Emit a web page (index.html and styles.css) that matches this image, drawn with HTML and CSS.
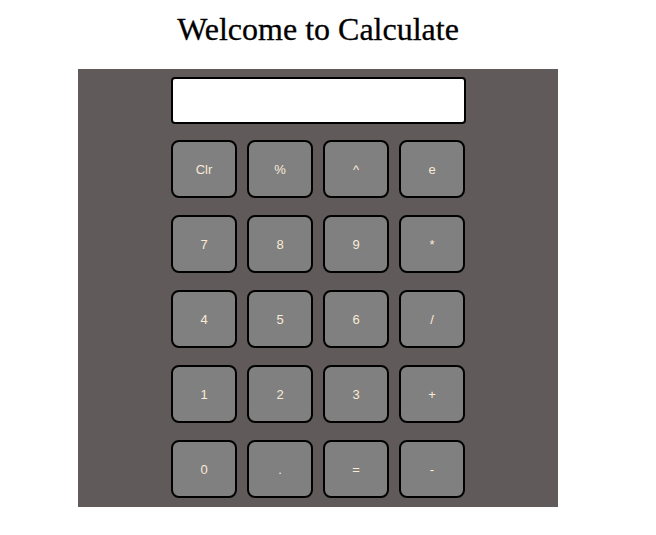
FILE: index.html
```html
<!DOCTYPE html>
<html lang="en">
<head>
  <meta charset="UTF-8" />
  <title>Calculate</title>
  <meta name="viewport" content="width=device-width, initial-scale=1.0"/>
  <link rel="stylesheet" href="styles.css">
</head>
<body>

<div class="page">
  <h1>Welcome to Calculate</h1>

  <div class="calculator">
    <input type="text" class="display" id="display">

    <div class="keys">
      <button class="key">Clr</button>
      <button class="key">%</button>
      <button class="key">^</button>
      <button class="key">e</button>

      <button class="key">7</button>
      <button class="key">8</button>
      <button class="key">9</button>
      <button class="key">*</button>

      <button class="key">4</button>
      <button class="key">5</button>
      <button class="key">6</button>
      <button class="key">/</button>

      <button class="key">1</button>
      <button class="key">2</button>
      <button class="key">3</button>
      <button class="key">+</button>

      <button class="key">0</button>
      <button class="key">.</button>
      <button class="key">=</button>
      <button class="key">-</button>
    </div>
  </div>
</div>

</body>
</html>
```

FILE: styles.css
```css
body {
  margin: 0;
  background-color: #fff;
  font-family: 'Liberation Serif', 'Times New Roman', serif;
}

.page {
  width: 636px;
}

h1 {
  margin: 11px 0 21px;
  font-size: 32px;
  font-weight: normal;
  line-height: 37px;
  text-align: center;
  color: #000;
  -webkit-text-stroke: 0.3px #000;
}

.calculator {
  width: 480px;
  margin: 0 auto;
  padding: 8px 0 9px;
  background-color: #615a5a;
  display: flex;
  flex-direction: column;
  align-items: center;
}

.display {
  box-sizing: border-box;
  width: 295px;
  height: 47px;
  margin: 0 0 16px;
  border: 2px solid #000;
  border-radius: 4px;
  background-color: #fff;
}

.keys {
  display: grid;
  grid-template-columns: repeat(4, 66px);
  grid-auto-rows: 58px;
  column-gap: 10px;
  row-gap: 17px;
}

.key {
  box-sizing: border-box;
  background-color: #808080;
  border: 2px solid #000;
  border-radius: 8px;
  color: #faebd7;
  font-family: 'Liberation Sans', Arial, sans-serif;
  font-size: 13px;
  cursor: pointer;
}
```
